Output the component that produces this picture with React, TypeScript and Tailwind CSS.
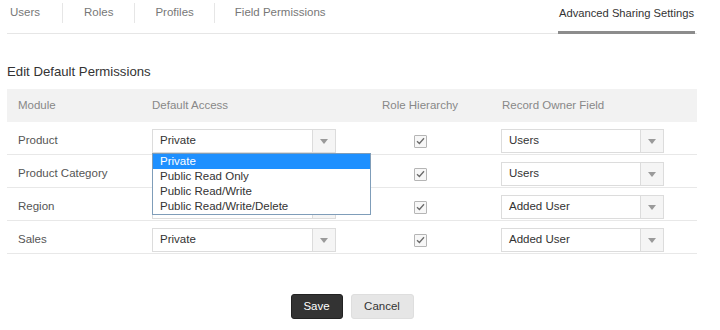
import React from "react";

function Arrow() {
  return (
    <div className="w-[23px] h-full border-l border-[#dcdcdc] bg-[#f5f5f5] flex items-center justify-center">
      <svg width="8" height="5" viewBox="0 0 8 5">
        <path d="M0 0 L8 0 L4 5 Z" fill="#9a9a9a" />
      </svg>
    </div>
  );
}

function Select({ value, width }: { value: string; width: string }) {
  return (
    <div className={`${width} h-[24px] border border-[#dcdcdc] bg-white flex items-center`}>
      <div className="flex-1 pl-[7px] text-[11.5px] text-[#333]">{value}</div>
      <Arrow />
    </div>
  );
}

function Check() {
  return (
    <div className="w-[13px] h-[13px] border border-[#b5b5b5] bg-[#f7f7f7] rounded-[1px] flex items-center justify-center">
      <svg width="9" height="8" viewBox="0 0 9 8">
        <path d="M1 4.2 L3.4 6.5 L8 1.2" stroke="#6a6a6a" strokeWidth="1.3" fill="none" />
      </svg>
    </div>
  );
}

const rows = [
  { m: "Product", a: "Private", o: "Users" },
  { m: "Product Category", a: "Private", o: "Users" },
  { m: "Region", a: "Private", o: "Added User" },
  { m: "Sales", a: "Private", o: "Added User" },
];

export default function App() {
  return (
    <div className="w-[720px] h-[330px] bg-white px-[7px] text-[11.5px]" style={{ fontFamily: '"Liberation Sans", Arial, sans-serif' }}>
      {/* Tabs */}
      <div className="w-[690px] h-[34px] border-b border-[#e6e6e6] flex items-stretch">
        <div className="flex items-start pt-[3px]">
          <div className="pl-[3px] pr-[22px] h-[20px] flex items-center border-r border-[#e6e6e6] text-[#777]">Users</div>
          <div className="px-[21px] h-[20px] flex items-center border-r border-[#e6e6e6] text-[#777]">Roles</div>
          <div className="px-[20px] h-[20px] flex items-center border-r border-[#e6e6e6] text-[#777]">Profiles</div>
          <div className="px-[20px] h-[20px] flex items-center text-[#777]">Field Permissions</div>
        </div>
        <div className="flex-1" />
        <div className="w-[137px] mr-[2px] border-b-[3px] border-[#8c8c8c] mb-[-1px] flex items-start justify-center pt-[3px]">
          <div className="h-[20px] flex items-center text-[#333] text-[11.2px] whitespace-nowrap">Advanced Sharing Settings</div>
        </div>
      </div>

      <div className="mt-[30px] text-[13.2px] text-[#333] leading-[16px]">Edit Default Permissions</div>

      {/* Table */}
      <div className="mt-[9px] w-[690px]">
        <div className="grid grid-cols-[134px_233px_92px_1fr] h-[33px] bg-[#f2f2f2] items-center text-[#888]">
          <div className="pl-[11px]">Module</div>
          <div className="pl-[11px]">Default Access</div>
          <div className="text-center">Role Hierarchy</div>
          <div className="pl-[36px]">Record Owner Field</div>
        </div>
        {rows.map((r, i) => (
          <div key={r.m} className="grid grid-cols-[134px_233px_92px_1fr] h-[33px] pt-[7px] border-b border-[#e8e8e8] items-start">
            <div className="pl-[11px] h-[24px] flex items-center text-[#555]">{r.m}</div>
            <div className="pl-[11px] relative">
              <Select value={r.a} width="w-[184px]" />
              {i === 0 && (
                <div className="absolute left-[11px] top-[24px] w-[219px] bg-white border border-[#7f9db9] z-10 text-[11.5px] text-[#333]">
                  <div className="h-[15px] leading-[15px] pl-[7px] bg-[#1e90ff] text-white">Private</div>
                  <div className="h-[15px] leading-[15px] pl-[7px]">Public Read Only</div>
                  <div className="h-[15px] leading-[15px] pl-[7px]">Public Read/Write</div>
                  <div className="h-[15px] leading-[15px] pl-[7px]">Public Read/Write/Delete</div>
                </div>
              )}
            </div>
            <div className="h-[24px] flex items-center justify-center">
              <Check />
            </div>
            <div className="pl-[35px]">
              <Select value={r.o} width="w-[163px]" />
            </div>
          </div>
        ))}
      </div>

      {/* Buttons */}
      <div className="w-[690px] mt-[40px] flex justify-center gap-[8px]">
        <button className="w-[52px] h-[25px] bg-[#333] text-white rounded-[3px] border border-[#222] text-[11.5px]">Save</button>
        <button className="w-[63px] h-[25px] bg-[#e6e6e6] text-[#333] rounded-[3px] border border-[#dedede] text-[11.5px]">Cancel</button>
      </div>
    </div>
  );
}
